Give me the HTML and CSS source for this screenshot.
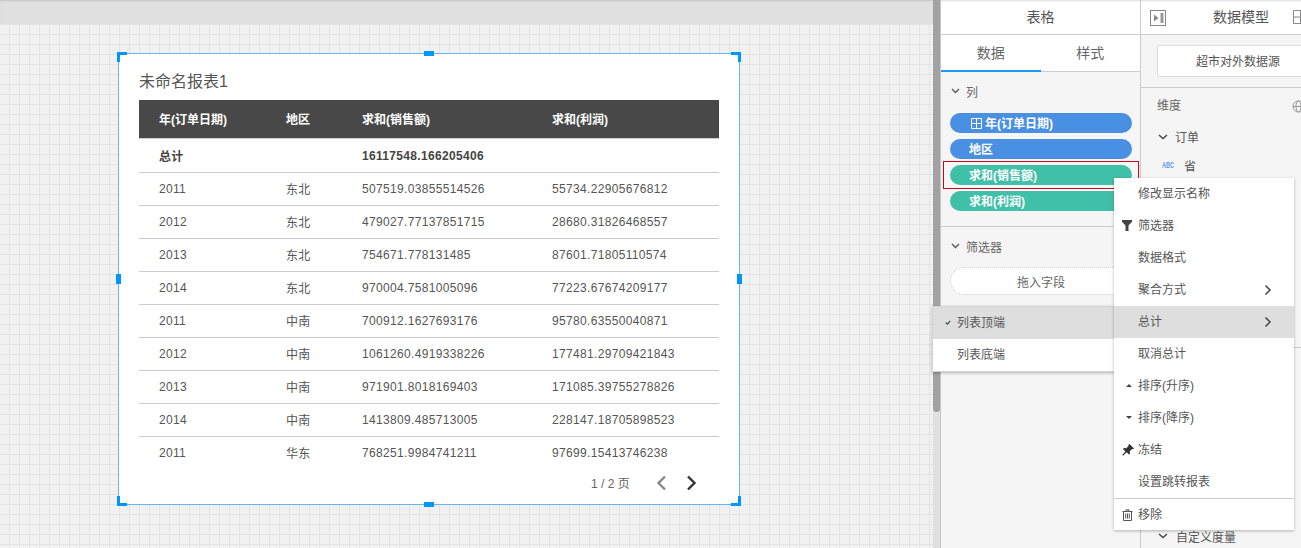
FILE: index.html
```html
<!DOCTYPE html>
<html lang="zh">
<head>
<meta charset="utf-8">
<title>未命名报表1</title>
<link rel="stylesheet" href="styles.css">
</head>
<body>
<div class="app">
  <main class="canvas">
    <div class="canvas-top"></div>
    <div class="canvas-grid">
      <section class="card">
        <span class="h c-tl"></span><span class="h c-tr"></span><span class="h c-bl"></span><span class="h c-br"></span>
        <span class="h m-t"></span><span class="h m-b"></span><span class="h m-l"></span><span class="h m-r"></span>
        <h1 class="card-title">未命名报表1</h1>
        <table class="report">
          <colgroup><col class="col-a"><col class="col-b"><col class="col-c"><col class="col-d"></colgroup>
          <thead><tr><th>年(订单日期)</th><th>地区</th><th>求和(销售额)</th><th>求和(利润)</th></tr></thead>
          <tbody>
            <tr class="total"><td>总计</td><td></td><td>16117548.166205406</td><td></td></tr>
            <tr><td>2011</td><td>东北</td><td>507519.03855514526</td><td>55734.22905676812</td></tr>
            <tr><td>2012</td><td>东北</td><td>479027.77137851715</td><td>28680.31826468557</td></tr>
            <tr><td>2013</td><td>东北</td><td>754671.778131485</td><td>87601.71805110574</td></tr>
            <tr><td>2014</td><td>东北</td><td>970004.7581005096</td><td>77223.67674209177</td></tr>
            <tr><td>2011</td><td>中南</td><td>700912.1627693176</td><td>95780.63550040871</td></tr>
            <tr><td>2012</td><td>中南</td><td>1061260.4919338226</td><td>177481.29709421843</td></tr>
            <tr><td>2013</td><td>中南</td><td>971901.8018169403</td><td>171085.39755278826</td></tr>
            <tr><td>2014</td><td>中南</td><td>1413809.485713005</td><td>228147.18705898523</td></tr>
            <tr class="last"><td>2011</td><td>华东</td><td>768251.9984741211</td><td>97699.15413746238</td></tr>
          </tbody>
        </table>
        <div class="pager">
          <span class="pager-text">1 / 2 页</span>
          <svg class="pager-prev" width="12" height="16" viewBox="0 0 12 16"><path d="M10 1.500 3.500 8l6.500 6.500" fill="none" stroke="#888" stroke-width="2.400"/></svg>
          <svg class="pager-next" width="12" height="16" viewBox="0 0 12 16"><path d="M2 1.500 8.500 8 2 14.500" fill="none" stroke="#333" stroke-width="2.400"/></svg>
        </div>
      </section>
    </div>
  </main>

  <div class="scrollbar"><div class="thumb"></div></div>

  <aside class="panel table-panel">
    <header class="panel-head">表格</header>
    <nav class="tabs"><span class="tab active">数据</span><span class="tab">样式</span></nav>
    <div class="section columns">
      <div class="sec-title"><svg class="chev" width="9" height="6" viewBox="0 0 9 6"><path d="M1 1l3.500 3.500L8 1" fill="none" stroke="#555" stroke-width="1.300"/></svg>列</div>
      <div class="pill blue"><svg class="pill-icon" width="13" height="13" viewBox="0 0 13 13"><path d="M1.500 1.500h10v10h-10zM6.500 1.500v10M1.500 6.500h10" fill="none" stroke="#fff" stroke-width="1"/></svg>年(订单日期)</div>
      <div class="pill blue">地区</div>
      <div class="pill green">求和(销售额)</div>
      <div class="pill green">求和(利润)</div>
    </div>
    <div class="section filters">
      <div class="sec-title"><svg class="chev" width="9" height="6" viewBox="0 0 9 6"><path d="M1 1l3.500 3.500L8 1" fill="none" stroke="#555" stroke-width="1.300"/></svg>筛选器</div>
      <div class="drop">拖入字段</div>
    </div>
  </aside>

  <aside class="panel model-panel">
    <header class="panel-head model-head">
      <svg class="collapse" width="16" height="16" viewBox="0 0 16 16"><rect x=".5" y=".5" width="15" height="15" fill="none" stroke="#888"/><path d="M4 4.500v7l4.500-3.500z" fill="#888"/><rect x="10.500" y="3" width="3" height="10" fill="#999"/></svg>
      <span class="model-title">数据模型</span>
      <svg class="grid-icon" width="15" height="14" viewBox="0 0 15 14"><path d="M.5.5h14v13H.5zM7.500.5v13M.5 7h14" fill="none" stroke="#888"/></svg>
    </header>
    <div class="source"><div class="source-btn">超市对外数据源</div></div>
    <div class="dim-head">维度<svg class="globe" width="13" height="13" viewBox="0 0 13 13"><g fill="none" stroke="#999"><circle cx="6.500" cy="6.500" r="5.500"/><ellipse cx="6.500" cy="6.500" rx="2.500" ry="5.500"/><path d="M1 6.500h11"/></g></svg></div>
    <div class="group"><svg class="chev" width="10" height="6" viewBox="0 0 10 6"><path d="M1 1l4 3.600L9 1" fill="none" stroke="#444" stroke-width="1.400"/></svg>订单</div>
    <div class="field"><span class="abc">ABC</span>省</div>
    <div class="model-spacer"><div class="model-rule"></div></div>
    <div class="group measure"><svg class="chev" width="10" height="6" viewBox="0 0 10 6"><path d="M1 1l4 3.600L9 1" fill="none" stroke="#444" stroke-width="1.400"/></svg>自定义度量</div>
  </aside>

  <div class="red-box"></div>

  <ul class="menu sub-menu">
    <li class="on"><svg class="check" width="6" height="5" viewBox="0 0 7 6"><path d="M.8 3l2 2L6.200 1" fill="none" stroke="#444" stroke-width="1.300"/></svg>列表顶端</li>
    <li>列表底端</li>
  </ul>

  <ul class="menu main-menu">
    <li>修改显示名称</li>
    <li><svg class="mi" width="10" height="11" viewBox="0 0 10 11"><path d="M0 0h10v1.800L6.500 5.500V11h-3V5.500L0 1.800z" fill="#444"/></svg>筛选器</li>
    <li>数据格式</li>
    <li>聚合方式<svg class="arrow" width="8" height="12" viewBox="0 0 8 12"><path d="M1.500 1.500 6 6l-4.500 4.500" fill="none" stroke="#444" stroke-width="1.500"/></svg></li>
    <li class="on">总计<svg class="arrow" width="8" height="12" viewBox="0 0 8 12"><path d="M1.500 1.500 6 6l-4.500 4.500" fill="none" stroke="#444" stroke-width="1.500"/></svg></li>
    <li>取消总计</li>
    <li><svg class="mi caret" width="6" height="3" viewBox="0 0 6 3"><path d="M3 0l3 3H0z" fill="#444"/></svg>排序(升序)</li>
    <li><svg class="mi caret" width="6" height="3" viewBox="0 0 6 3"><path d="M0 0h6L3 3z" fill="#444"/></svg>排序(降序)</li>
    <li><svg class="mi" width="12" height="12" viewBox="0 0 12 12"><path d="M7.500 0 12 4.500l-1 .8-1-.2-2.200 2.200.2 2.400-1 .9-2.400-2.400L1 11.800.2 11l3.200-3.600L1 5l.9-1 2.400.2L6.500 2l-.2-1z" fill="#333"/></svg>冻结</li>
    <li>设置跳转报表</li>
    <li class="sep"><svg class="mi" width="11" height="12" viewBox="0 0 11 12"><path d="M.5 2.500h10M4 2.500V.8h3v1.700M1.500 2.500v9h8v-9M3.700 4.500v5M5.500 4.500v5M7.300 4.500v5" fill="none" stroke="#555"/></svg>移除</li>
  </ul>
</div>
</body>
</html>
```
FILE: styles.css
```css
* { box-sizing: border-box; }
html, body { margin: 0; height: 100%; overflow: hidden; }
body {
  font-family: "Liberation Sans", "Noto Sans CJK SC", sans-serif;
  font-size: 12px;
  color: #555;
  background: #f5f5f5;
}
.app { position: relative; display: flex; width: 1301px; height: 548px; overflow: hidden; }

/* canvas */
.canvas { width: 933px; flex: none; display: flex; flex-direction: column; }
.canvas-top {
  height: 24px;
  flex: none;
  background: #e0e0e0;
  box-shadow: inset 0 2px 2px -1px #c4c4c4;
}
.canvas-grid {
  flex: 1;
  padding: 29px 0 0 118px;
  background-color: #f1f1f1;
  background-image:
    linear-gradient(to right, #e3e3e3 1px, transparent 1px),
    linear-gradient(to bottom, #e3e3e3 1px, transparent 1px);
  background-size: 10px 10px;
  background-position: 9px 0, 0 0;
}
.card {
  position: relative;
  width: 622px;
  height: 452px;
  padding: 0 20px;
  background: #fff;
  border: 1px solid #66b6f6;
}
.h { position: absolute; background: #0096ff; }
.c-tl, .c-tr, .c-bl, .c-br { width: 10px; height: 10px; background: none; border: 0 solid #0096ff; }
.c-tl { left: -2px; top: -2px; border-width: 3px 0 0 3px; }
.c-tr { right: -2px; top: -2px; border-width: 3px 3px 0 0; }
.c-bl { left: -2px; bottom: -2px; border-width: 0 0 3px 3px; }
.c-br { right: -2px; bottom: -2px; border-width: 0 3px 3px 0; }
.m-t, .m-b { width: 10px; height: 5px; left: 305px; }
.m-t { top: -3px; }
.m-b { bottom: -3px; }
.m-l, .m-r { width: 5px; height: 10px; top: 220px; }
.m-l { left: -3px; }
.m-r { right: -3px; }
.card-title {
  margin: 0;
  height: 46px;
  padding-top: 17px;
  font-size: 16px;
  font-weight: 400;
  line-height: 22px;
  color: #555;
}
.report { width: 580px; border-collapse: collapse; table-layout: fixed; }
.col-a { width: 127px; }
.col-b { width: 76px; }
.col-c { width: 190px; }
.col-d { width: 187px; }
.report th {
  height: 38px;
  padding: 0 0 1px 20px;
  background: #484848;
  color: #fff;
  font-weight: 700;
  text-align: left;
  border-bottom: 1px solid #ccc;
}
.report td {
  height: 33px;
  padding: 0 0 0 20px;
  border-bottom: 1px solid #ccc;
  color: #555;
  letter-spacing: .33px;
  white-space: nowrap;
}
.report tr.total td { height: 34px; padding-top: 1px; font-weight: 700; color: #444; }
.report tr.last td { border-bottom: 0; }
.pager { display: flex; align-items: center; height: 28px; padding-left: 452px; }
.pager-text { width: 64px; padding-bottom: 2px; color: #666; }
.pager-prev { margin-right: 19px; }

/* scrollbar */
.scrollbar { width: 8px; flex: none; background: #e0e0e0; border-right: 1px solid #c6c6c6; }
.thumb { width: 7px; height: 412px; background: #a2a2a2; border-radius: 0 0 3px 3px; }

/* panels */
.panel { flex: none; display: flex; flex-direction: column; background: #f5f5f5; }
.panel-head {
  height: 35px;
  flex: none;
  display: flex;
  align-items: center;
  justify-content: center;
  padding-bottom: 2px;
  background: #fff;
  border-bottom: 1px solid #ccc;
  box-shadow: inset 0 2px 2px -1px #ddd;
  font-size: 14px;
  color: #555;
}
.table-panel { width: 200px; border-right: 1px solid #ccc; }
.tabs { display: flex; height: 37px; flex: none; background: #fff; border-bottom: 1px solid #ccc; }
.tab { width: 100px; height: 37px; line-height: 37px; text-align: center; font-size: 14px; color: #666; }
.tab.active { border-bottom: 2px solid #2196f3; }
.section { padding: 0 8px 0 9px; }
.columns { height: 155px; border-bottom: 1px solid #ccc; }
.filters { padding-right: 0; }
.sec-title { display: flex; align-items: center; height: 40px; padding: 0 0 2px 1px; color: #666; }
.sec-title .chev { margin-right: 6px; }
.pill {
  display: flex;
  align-items: center;
  width: 182px;
  height: 20px;
  margin-bottom: 6px;
  padding: 0 0 2px 19px;
  border-radius: 10px;
  color: #fff;
  font-weight: 700;
}
.columns .sec-title { margin-bottom: 1px; }
.blue { background: #4a90e2; }
.green { background: #40c0a7; }
.pill-icon { margin: 2px 2px 0 1px; }
.drop {
  height: 28px;
  line-height: 31px;
  text-align: center;
  width: 182px;
  background: #fff;
  border: 1px dotted #ccc;
  border-radius: 14px;
  color: #666;
}

.model-panel { width: 160px; }
.model-head { position: relative; justify-content: flex-start; padding-left: 9px; }
.collapse { flex: none; margin-top: 4px; }
.model-title { margin-left: 47px; }
.grid-icon { position: absolute; left: 152px; top: 10px; }
.source { height: 53px; flex: none; padding: 10px 0 0 16px; border-bottom: 1px solid #ccc; }
.source-btn {
  width: 162px;
  height: 32px;
  line-height: 33px;
  text-align: center;
  background: #fff;
  border: 1px solid #ddd;
  border-radius: 2px;
  color: #555;
}
.dim-head { position: relative; height: 36px; flex: none; padding-left: 16px; line-height: 37px; color: #666; }
.globe { position: absolute; left: 151px; top: 12px; }
.group { display: flex; align-items: center; height: 28px; flex: none; padding: 0 0 3px 17px; color: #555; }
.group .chev { margin-right: 7px; }
.field { display: flex; align-items: center; height: 30px; flex: none; padding: 0 0 4px 21px; color: #555; }
.abc { display: block; width: 22px; font-size: 9px; font-weight: 700; color: #5a9bea; transform: scaleX(.62); transform-origin: left center; }
.model-spacer { flex: 1; }
.model-rule { height: 166px; border-bottom: 1px solid #ccc; }
.measure { height: 22px; padding: 0 0 2px 17px; }
.measure .chev { margin-right: 8px; }

/* overlays */
.red-box {
  position: absolute;
  left: 943px;
  top: 161px;
  width: 196px;
  height: 28px;
  border: 1px solid #d0021b;
}
.menu {
  position: absolute;
  margin: 0;
  padding: 0;
  list-style: none;
  background: #fff;
  box-shadow: 0 1px 3px rgba(0, 0, 0, .28);
  color: #555;
}
.menu li { position: relative; display: flex; align-items: center; height: 32px; padding: 0 0 3px 24px; }
.menu li.on { background: #dedede; }
.sub-menu { left: 932px; top: 306px; width: 182px; height: 66px; border: 1px solid #d4d4d4; border-right: 0; }
.check { position: absolute; left: 12px; top: 13px; }
.main-menu { left: 1114px; top: 178px; width: 180px; height: 352px; }
.mi { position: absolute; left: 8px; top: 10px; }
.caret { left: 12px; top: 14px; }
.arrow { position: absolute; left: 150px; top: 10px; }
.menu li.sep { border-top: 1px solid #ccc; }
```
